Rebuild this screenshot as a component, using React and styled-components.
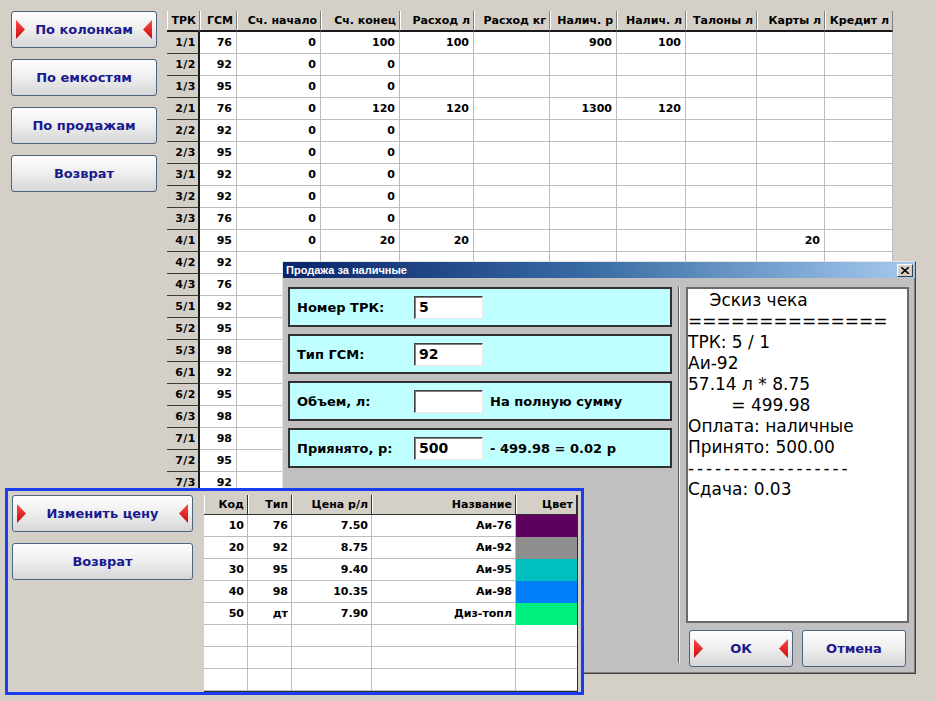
import React from 'react'
import styled, { createGlobalStyle } from 'styled-components'

const GlobalStyle = createGlobalStyle`
  html, body {
    margin: 0;
    padding: 0;
    background: #d4d0c8;
  }
  body {
    font-family: "DejaVu Sans", Verdana, sans-serif;
  }
`

const FONT = '"DejaVu Sans", Verdana, sans-serif'

const pumps = [
  ['1/1', '76', '0', '100', '100', '', '900', '100', '', '', ''],
  ['1/2', '92', '0', '0', '', '', '', '', '', '', ''],
  ['1/3', '95', '0', '0', '', '', '', '', '', '', ''],
  ['2/1', '76', '0', '120', '120', '', '1300', '120', '', '', ''],
  ['2/2', '92', '0', '0', '', '', '', '', '', '', ''],
  ['2/3', '95', '0', '0', '', '', '', '', '', '', ''],
  ['3/1', '92', '0', '0', '', '', '', '', '', '', ''],
  ['3/2', '92', '0', '0', '', '', '', '', '', '', ''],
  ['3/3', '76', '0', '0', '', '', '', '', '', '', ''],
  ['4/1', '95', '0', '20', '20', '', '', '', '', '20', ''],
  ['4/2', '92'],
  ['4/3', '76'],
  ['5/1', '92'],
  ['5/2', '95'],
  ['5/3', '98'],
  ['6/1', '92'],
  ['6/2', '95'],
  ['6/3', '98'],
  ['7/1', '98'],
  ['7/2', '95'],
  ['7/3', '92'],
]

const columns = [
  'ТРК', 'ГСМ', 'Сч. начало', 'Сч. конец', 'Расход л', 'Расход кг',
  'Налич. р', 'Налич. л', 'Талоны л', 'Карты л', 'Кредит л',
]

const prices = [
  ['10', '76', '7.50', 'Аи-76', '#5e005e'],
  ['20', '92', '8.75', 'Аи-92', '#8e8e8e'],
  ['30', '95', '9.40', 'Аи-95', '#00bfbf'],
  ['40', '98', '10.35', 'Аи-98', '#0080f8'],
  ['50', 'дт', '7.90', 'Диз-топл', '#00f080'],
  ['', '', '', '', ''],
  ['', '', '', '', ''],
  ['', '', '', '', ''],
]

const receipt = [
  '    Эскиз чека',
  '==============',
  'ТРК: 5 / 1',
  'Аи-92',
  '57.14 л * 8.75',
  '        = 499.98',
  'Оплата: наличные',
  'Принято: 500.00',
]

const Marker = ({ left }) => (
  <svg width="9" height="19" viewBox="0 0 9 19">
    <defs>
      <linearGradient id={left ? 'mkL' : 'mkR'} x1="0" y1="0" x2="0" y2="1">
        <stop offset="0" stopColor="#ff4a4a" />
        <stop offset="1" stopColor="#c80a0a" />
      </linearGradient>
    </defs>
    <polygon
      points={left ? '0,0 9,9.5 0,19' : '9,0 0,9.5 9,19'}
      fill={`url(#${left ? 'mkL' : 'mkR'})`}
    />
  </svg>
)

const PanelButton = ({ marked, width, children }) => (
  <Button $width={width}>
    <MarkSlot>{marked && <Marker left />}</MarkSlot>
    <span>{children}</span>
    <MarkSlot>{marked && <Marker />}</MarkSlot>
  </Button>
)

const App = () => (
  <>
    <GlobalStyle />
    <Screen>
      <Sidebar>
        <PanelButton marked width={146}>По колонкам</PanelButton>
        <PanelButton width={146}>По емкостям</PanelButton>
        <PanelButton width={146}>По продажам</PanelButton>
        <PanelButton width={146}>Возврат</PanelButton>
      </Sidebar>

      <PumpTable>
        <PumpRow>
          {columns.map(c => (
            <HeadCell key={c}>{c}</HeadCell>
          ))}
        </PumpRow>
        {pumps.map(row => (
          <PumpRow key={row[0]}>
            <RowHead>{row[0]}</RowHead>
            {columns.slice(1).map((c, i) => (
              <Cell key={c}>{row[i + 1] || ''}</Cell>
            ))}
          </PumpRow>
        ))}
      </PumpTable>

      <Dialog>
        <TitleBar>
          <span>Продажа за наличные</span>
          <CloseBox>
            <svg width="8" height="7" viewBox="0 0 8 7">
              <path d="M0 0 L8 7 M8 0 L0 7" stroke="#000" strokeWidth="1.6" />
            </svg>
          </CloseBox>
        </TitleBar>
        <DialogBody>
          <Fields>
            <Field>
              <FieldLabel>Номер ТРК:</FieldLabel>
              <Input>5</Input>
            </Field>
            <Field>
              <FieldLabel>Тип ГСМ:</FieldLabel>
              <Input>92</Input>
            </Field>
            <Field>
              <FieldLabel>Объем, л:</FieldLabel>
              <Input />
              <FieldNote>На полную сумму</FieldNote>
            </Field>
            <Field>
              <FieldLabel>Приянято, р:</FieldLabel>
              <Input>500</Input>
              <FieldNote>- 499.98 = 0.02 р</FieldNote>
            </Field>
          </Fields>
          <Divider />
          <ReceiptColumn>
            <Receipt>
              {receipt.map(line => (
                <ReceiptLine key={line}>{line}</ReceiptLine>
              ))}
              <ReceiptLine $spaced>------------------</ReceiptLine>
              <ReceiptLine>Сдача: 0.03</ReceiptLine>
            </Receipt>
            <DialogButtons>
              <PanelButton marked width={104}>ОК</PanelButton>
              <PanelButton width={104}>Отмена</PanelButton>
            </DialogButtons>
          </ReceiptColumn>
        </DialogBody>
      </Dialog>

      <PricePanel>
        <PriceButtons>
          <PanelButton marked width={181}>Изменить цену</PanelButton>
          <PanelButton width={181}>Возврат</PanelButton>
        </PriceButtons>
        <PriceTable>
          <PriceRow>
            <PriceHead>Код</PriceHead>
            <PriceHead>Тип</PriceHead>
            <PriceHead>Цена р/л</PriceHead>
            <PriceHead>Название</PriceHead>
            <PriceHead>Цвет</PriceHead>
          </PriceRow>
          {prices.map((p, i) => (
            <PriceRow key={i}>
              <PriceCell>{p[0]}</PriceCell>
              <PriceCell>{p[1]}</PriceCell>
              <PriceCell>{p[2]}</PriceCell>
              <PriceCell>{p[3]}</PriceCell>
              <Swatch $color={p[4]} />
            </PriceRow>
          ))}
        </PriceTable>
      </PricePanel>
    </Screen>
  </>
)

export default App

const Screen = styled.div`
  position: relative;
  width: 935px;
  height: 701px;
  box-sizing: border-box;
  padding: 11px 0 0 11px;
  display: flex;
  align-items: flex-start;
  gap: 10px;
  background: #d4d0c8;
  overflow: hidden;
  font-family: ${FONT};
`

const Sidebar = styled.div`
  display: flex;
  flex-direction: column;
  gap: 11px;
`

const Button = styled.div`
  box-sizing: border-box;
  width: ${p => p.$width}px;
  height: 37px;
  display: grid;
  grid-template-columns: 9px 1fr 9px;
  align-items: center;
  padding: 0 4px;
  border: 1px solid #4d6480;
  border-radius: 3px;
  background: linear-gradient(#fdfdfd 0%, #f0f0f0 45%, #d6d6d6 100%);
  box-shadow: inset 0 1px #fff;
  color: #1a1a8e;
  font: bold 13px ${FONT};
  text-align: center;
  white-space: nowrap;
`

const MarkSlot = styled.span`
  display: flex;
  align-items: center;
  height: 19px;
`

const PumpTable = styled.div`
  display: flex;
  flex-direction: column;
`

const PumpRow = styled.div`
  display: grid;
  grid-template-columns: 33px 37px 84px 79px 74px 76px 67px 69px 71px 68px 68px;
`

const Cell = styled.div`
  box-sizing: border-box;
  height: 22px;
  padding: 0 4px;
  display: flex;
  align-items: center;
  justify-content: flex-end;
  background: #fff;
  border-right: 1px solid #bcbcbc;
  border-bottom: 1px solid #bcbcbc;
  color: #000;
  font: bold 11px ${FONT};
  white-space: nowrap;
  overflow: hidden;
`

const RowHead = styled(Cell)`
  background: #d4d0c8;
  border-right: 2px solid #1a1a1a;
  border-bottom: 1px solid #3a3a3a;
  padding-right: 2px;
  letter-spacing: 0.5px;
`

const HeadCell = styled(Cell)`
  height: 21px;
  background: #d4d0c8;
  border-right: 1px solid #808080;
  border-bottom: 2px solid #1a1a1a;
  box-shadow: inset 1px 0 #fff;
  padding-right: 3px;
`

const Dialog = styled.div`
  position: absolute;
  left: 282px;
  top: 261px;
  width: 634px;
  height: 413px;
  box-sizing: border-box;
  border: 1px solid;
  border-color: #e4e4e4 #404040 #404040 #e4e4e4;
  box-shadow: inset -1px -1px #808080;
  background: #c0c0c0;
  display: flex;
  flex-direction: column;
`

const TitleBar = styled.div`
  height: 16px;
  display: flex;
  align-items: center;
  justify-content: space-between;
  padding: 0 2px 0 3px;
  background: linear-gradient(90deg, #0a246a 0%, #3a6ea5 50%, #a6caf0 100%);
  color: #fff;
  font: bold 11px "Liberation Sans", Arial, sans-serif;
`

const CloseBox = styled.div`
  box-sizing: border-box;
  width: 16px;
  height: 13px;
  display: flex;
  align-items: center;
  justify-content: center;
  background: #d4d0c8;
  border: 1px solid;
  border-color: #fff #404040 #404040 #fff;
`

const DialogBody = styled.div`
  display: flex;
  padding: 9px 6px 0 5px;
`

const Fields = styled.div`
  width: 384px;
  display: flex;
  flex-direction: column;
  gap: 7px;
`

const Field = styled.div`
  box-sizing: border-box;
  height: 40px;
  display: flex;
  align-items: center;
  padding: 0 7px;
  background: #bfffff;
  border: 2px solid #303030;
  color: #000;
  font: bold 13px ${FONT};
`

const FieldLabel = styled.span`
  width: 117px;
  white-space: nowrap;
`

const Input = styled.div`
  box-sizing: border-box;
  width: 69px;
  height: 23px;
  padding: 0 4px;
  display: flex;
  align-items: center;
  background: #fff;
  border: 1px solid;
  border-color: #404040 #e8e8e8 #e8e8e8 #404040;
  box-shadow: inset 1px 1px #808080;
  font: bold 14px ${FONT};
`

const FieldNote = styled.span`
  margin-left: 7px;
  white-space: nowrap;
`

const Divider = styled.div`
  width: 0;
  height: 376px;
  margin: 0 6px;
  border-left: 1px solid #5a5a5a;
  border-right: 1px solid #f4f4f4;
`

const ReceiptColumn = styled.div`
  width: 223px;
  display: flex;
  flex-direction: column;
  gap: 7px;
`

const Receipt = styled.div`
  box-sizing: border-box;
  height: 336px;
  padding: 1px 0 0 0;
  background: #fff;
  border: 2px solid #6a6a6a;
  color: #000;
  font: 17px ${FONT};
`

const ReceiptLine = styled.div`
  height: 21px;
  line-height: 21px;
  white-space: pre;
  letter-spacing: ${p => (p.$spaced ? '2.9px' : '0')};
`

const DialogButtons = styled.div`
  display: flex;
  gap: 9px;
  padding-left: 3px;
`

const PricePanel = styled.div`
  position: absolute;
  left: 5px;
  top: 488px;
  width: 579px;
  height: 207px;
  box-sizing: border-box;
  padding: 4px 3px 0 4px;
  border: 3px solid #1c3cf2;
  background: #d4d0c8;
  display: flex;
  gap: 11px;
`

const PriceButtons = styled.div`
  display: flex;
  flex-direction: column;
  gap: 11px;
`

const PriceTable = styled.div`
  display: flex;
  flex-direction: column;
  border-bottom: 1px solid #303030;
  border-right: 1px solid #303030;
`

const PriceRow = styled.div`
  display: grid;
  grid-template-columns: 44px 44px 80px 144px 61px;
`

const PriceCell = styled(Cell)`
  padding-right: 3px;
`

const PriceHead = styled(PriceCell)`
  height: 20px;
  background: #d4d0c8;
  border-right: 1px solid #303030;
  border-bottom: 1px solid #303030;
  box-shadow: inset 1px 0 #fff;
`

const Swatch = styled.div`
  box-sizing: border-box;
  height: 22px;
  background: ${p => p.$color || '#fff'};
  border-bottom: 1px solid ${p => (p.$color ? p.$color : '#c4c4c4')};
`
